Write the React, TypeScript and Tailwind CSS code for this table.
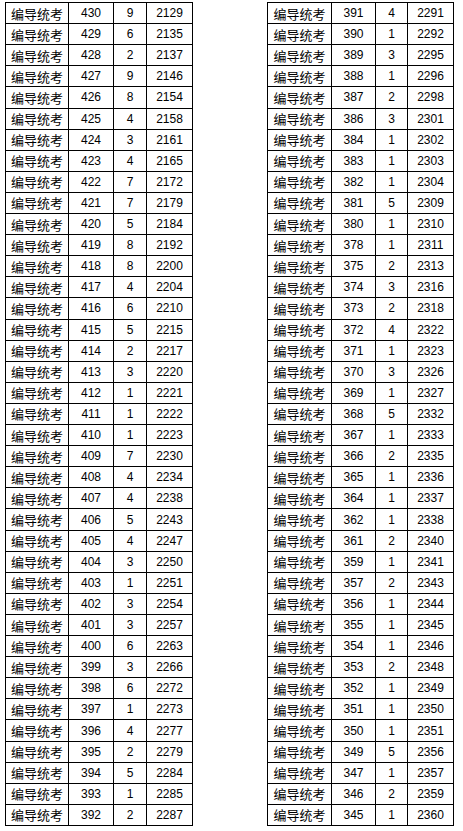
import React from "react";

const left: [number, number, number][] = [
  [430, 9, 2129],[429, 6, 2135],[428, 2, 2137],[427, 9, 2146],[426, 8, 2154],[425, 4, 2158],[424, 3, 2161],[423, 4, 2165],[422, 7, 2172],[421, 7, 2179],[420, 5, 2184],[419, 8, 2192],[418, 8, 2200],[417, 4, 2204],[416, 6, 2210],[415, 5, 2215],[414, 2, 2217],[413, 3, 2220],[412, 1, 2221],[411, 1, 2222],[410, 1, 2223],[409, 7, 2230],[408, 4, 2234],[407, 4, 2238],[406, 5, 2243],[405, 4, 2247],[404, 3, 2250],[403, 1, 2251],[402, 3, 2254],[401, 3, 2257],[400, 6, 2263],[399, 3, 2266],[398, 6, 2272],[397, 1, 2273],[396, 4, 2277],[395, 2, 2279],[394, 5, 2284],[393, 1, 2285],[392, 2, 2287],
];

const right: [number, number, number][] = [
  [391, 4, 2291],[390, 1, 2292],[389, 3, 2295],[388, 1, 2296],[387, 2, 2298],[386, 3, 2301],[384, 1, 2302],[383, 1, 2303],[382, 1, 2304],[381, 5, 2309],[380, 1, 2310],[378, 1, 2311],[375, 2, 2313],[374, 3, 2316],[373, 2, 2318],[372, 4, 2322],[371, 1, 2323],[370, 3, 2326],[369, 1, 2327],[368, 5, 2332],[367, 1, 2333],[366, 2, 2335],[365, 1, 2336],[364, 1, 2337],[362, 1, 2338],[361, 2, 2340],[359, 1, 2341],[357, 2, 2343],[356, 1, 2344],[355, 1, 2345],[354, 1, 2346],[353, 2, 2348],[352, 1, 2349],[351, 1, 2350],[350, 1, 2351],[349, 5, 2356],[347, 1, 2357],[346, 2, 2359],[345, 1, 2360],
];

const cell = "flex items-center justify-center border-r border-b border-black overflow-hidden";
const num = "text-[12px] font-['Liberation_Sans',sans-serif] text-black";
const cjk = "text-[13px] font-['Noto_Sans_CJK_SC',sans-serif] text-black leading-none";

function Table({ rows, cols }: { rows: [number, number, number][]; cols: string }) {
  return (
    <div className={`grid ${cols} grid-rows-[repeat(39,minmax(0,1fr))] h-[824px] border-l border-t border-black`}>
      {rows.map(([a, b, c], i) => (
        <React.Fragment key={i}>
          <div className={cell}><span className={cjk}>编导统考</span></div>
          <div className={cell}><span className={num}>{a}</span></div>
          <div className={cell}><span className={num}>{b}</span></div>
          <div className={cell}><span className={num}>{c}</span></div>
        </React.Fragment>
      ))}
    </div>
  );
}

export default function App() {
  return (
    <div className="w-[463px] h-[831px] bg-white flex items-start pt-[2px] pl-[5px] gap-[74px]">
      <Table rows={left} cols="grid-cols-[63px_45px_33px_46px]" />
      <Table rows={right} cols="grid-cols-[64px_44px_32px_46px]" />
    </div>
  );
}
